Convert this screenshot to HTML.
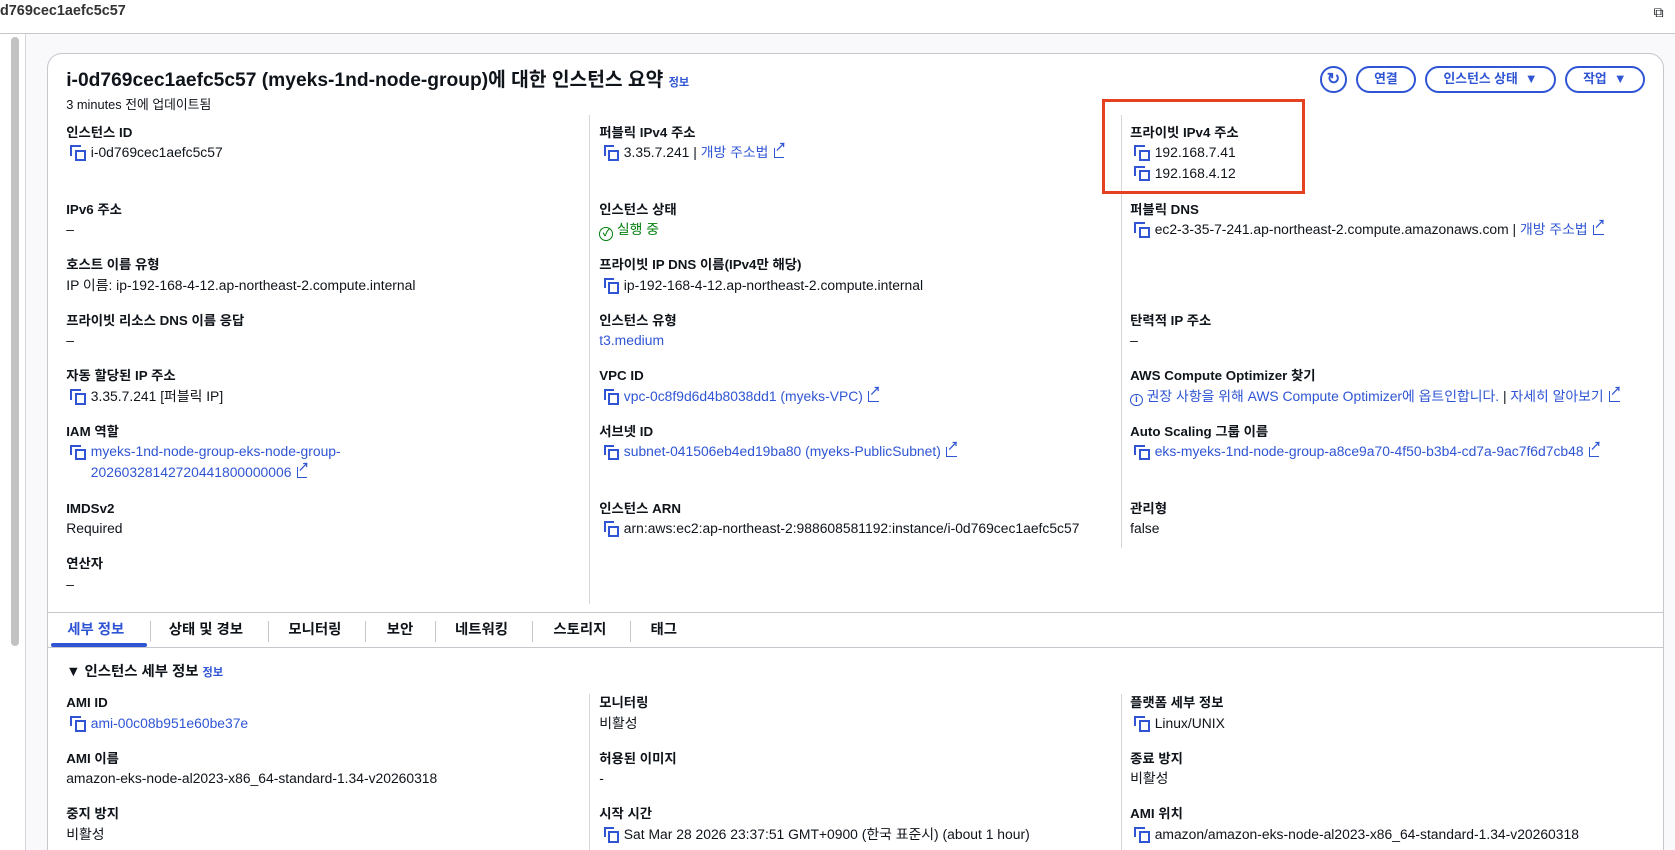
<!DOCTYPE html>
<html><head><meta charset="utf-8"><style>
html,body{margin:0;padding:0;overflow:hidden;background:#fff}
body{width:1568px;height:796px;zoom:1.0682;position:relative;font-family:"Liberation Sans","Noto Sans CJK KR",sans-serif;color:#0f141a;font-size:13px;line-height:16px}
.a{position:absolute;white-space:nowrap;line-height:16px}
.top{position:absolute;left:0;top:0;width:1568px;height:31px;border-bottom:1px solid #c6c6cd;background:#fff}
.bg{position:absolute;left:23px;top:32px;width:1545px;height:764px;background:#f9f9fb;border-left:1px solid #d5d5dc}
.scroll{position:absolute;left:10px;top:35px;width:8px;height:570px;background:#c2c2c2;border-radius:4px}
.card{position:absolute;left:44px;top:50px;width:1512px;height:760px;background:#fff;border:1px solid #c6c6cd;border-radius:14px}
.t{font-size:18px;font-weight:bold;line-height:22px}
.l{font-weight:bold;font-size:12.5px}
.b{color:#2f55d4}
.info{color:#2f55d4;font-size:10.5px;font-weight:bold}
.ic{display:inline-block;width:13px;height:13px;position:relative;vertical-align:-2px;margin-right:6px;margin-left:4px}
.ic:before{content:"";position:absolute;left:0;top:0;width:8px;height:8px;border-left:2px solid #2f55d4;border-top:2px solid #2f55d4}
.ic:after{content:"";position:absolute;left:4px;top:4px;width:7px;height:7px;border:2px solid #2f55d4}
.ext{display:inline-block;width:9px;height:9px;border:1.8px solid #2f55d4;border-top:none;border-right:none;margin-left:5px;position:relative;vertical-align:-1px}
.ext:after{content:"↗";position:absolute;left:0px;top:-6px;color:#2f55d4;font-size:11px;font-weight:bold;line-height:14px}
.div{position:absolute;width:1px;background:#d5d5dc}
.btn{position:absolute;top:62px;height:21px;border:2px solid #2f55d4;border-radius:13px;color:#2f55d4;font-weight:bold;font-size:12px;text-align:center;line-height:21px}
.tab{position:absolute;top:582px;font-size:13.5px;font-weight:bold;color:#0f141a}
.sep{position:absolute;top:581px;width:1px;height:20px;background:#c6c6cd}
</style></head><body>
<div class="top"></div>
<div class="a" style="left:0;top:3px;font-size:13.5px;font-weight:bold;color:#333">d769cec1aefc5c57</div>
<div class="a" style="left:1548px;top:4px;font-size:13px">⧉</div>
<div class="bg"></div>
<div class="scroll"></div>
<div class="card"></div>

<div class="a t" style="left:62px;top:65px">i-0d769cec1aefc5c57 (myeks-1nd-node-group)에 대한 인스턴스 요약 <span class="info">정보</span></div>
<div class="a" style="left:62px;top:90px;font-size:12px">3 minutes 전에 업데이트됨</div>

<div class="a" style="left:1236px;top:62px;width:21px;height:21px;border:2px solid #2f55d4;border-radius:50%;color:#2f55d4;text-align:center;font-weight:bold;line-height:21px;font-size:15px">↻</div>
<div class="btn" style="left:1269px;width:53px">연결</div>
<div class="btn" style="left:1334px;width:119px">인스턴스 상태 &nbsp;▼</div>
<div class="btn" style="left:1465px;width:71px">작업 &nbsp;▼</div>

<div class="div" style="left:551px;top:108px;height:457px"></div>
<div class="div" style="left:1049px;top:108px;height:405px"></div>

<!-- col1 -->
<div class="a l" style="left:62px;top:116px">인스턴스 ID</div>
<div class="a" style="left:62px;top:135px"><span class="ic"></span>i-0d769cec1aefc5c57</div>
<div class="a l" style="left:62px;top:188px">IPv6 주소</div>
<div class="a" style="left:62px;top:207px">–</div>
<div class="a l" style="left:62px;top:240px">호스트 이름 유형</div>
<div class="a" style="left:62px;top:259px">IP 이름: ip-192-168-4-12.ap-northeast-2.compute.internal</div>
<div class="a l" style="left:62px;top:292px">프라이빗 리소스 DNS 이름 응답</div>
<div class="a" style="left:62px;top:311px">–</div>
<div class="a l" style="left:62px;top:344px">자동 할당된 IP 주소</div>
<div class="a" style="left:62px;top:363px"><span class="ic"></span>3.35.7.241 [퍼블릭 IP]</div>
<div class="a l" style="left:62px;top:396px">IAM 역할</div>
<div class="a b" style="left:62px;top:415px"><span class="ic"></span>myeks-1nd-node-group-eks-node-group-</div>
<div class="a b" style="left:85px;top:434px">20260328142720441800000006<span class="ext"></span></div>
<div class="a l" style="left:62px;top:468px">IMDSv2</div>
<div class="a" style="left:62px;top:487px">Required</div>
<div class="a l" style="left:62px;top:520px">연산자</div>
<div class="a" style="left:62px;top:539px">–</div>

<!-- col2 -->
<div class="a l" style="left:561px;top:116px">퍼블릭 IPv4 주소</div>
<div class="a" style="left:561px;top:135px"><span class="ic"></span>3.35.7.241 | <span class="b">개방 주소법</span><span class="ext"></span></div>
<div class="a l" style="left:561px;top:188px">인스턴스 상태</div>
<div class="a" style="left:561px;top:207px;color:#037f0c"><span style="display:inline-block;width:11px;height:11px;border:1.5px solid #037f0c;border-radius:50%;font-size:9px;line-height:11px;text-align:center;vertical-align:-2px;font-weight:bold">✓</span> 실행 중</div>
<div class="a l" style="left:561px;top:240px">프라이빗 IP DNS 이름(IPv4만 해당)</div>
<div class="a" style="left:561px;top:259px"><span class="ic"></span>ip-192-168-4-12.ap-northeast-2.compute.internal</div>
<div class="a l" style="left:561px;top:292px">인스턴스 유형</div>
<div class="a b" style="left:561px;top:311px">t3.medium</div>
<div class="a l" style="left:561px;top:344px">VPC ID</div>
<div class="a b" style="left:561px;top:363px"><span class="ic"></span>vpc-0c8f9d6d4b8038dd1 (myeks-VPC)<span class="ext"></span></div>
<div class="a l" style="left:561px;top:396px">서브넷 ID</div>
<div class="a b" style="left:561px;top:415px"><span class="ic"></span>subnet-041506eb4ed19ba80 (myeks-PublicSubnet)<span class="ext"></span></div>
<div class="a l" style="left:561px;top:468px">인스턴스 ARN</div>
<div class="a" style="left:561px;top:487px"><span class="ic"></span>arn:aws:ec2:ap-northeast-2:988608581192:instance/i-0d769cec1aefc5c57</div>

<!-- col3 -->
<div class="a l" style="left:1058px;top:116px">프라이빗 IPv4 주소</div>
<div class="a" style="left:1058px;top:135px"><span class="ic"></span>192.168.7.41</div>
<div class="a" style="left:1058px;top:154px"><span class="ic"></span>192.168.4.12</div>
<div class="a l" style="left:1058px;top:188px">퍼블릭 DNS</div>
<div class="a" style="left:1058px;top:207px"><span class="ic"></span>ec2-3-35-7-241.ap-northeast-2.compute.amazonaws.com | <span class="b">개방 주소법</span><span class="ext"></span></div>
<div class="a l" style="left:1058px;top:292px">탄력적 IP 주소</div>
<div class="a" style="left:1058px;top:311px">–</div>
<div class="a l" style="left:1058px;top:344px">AWS Compute Optimizer 찾기</div>
<div class="a b" style="left:1058px;top:363px"><span style="display:inline-block;width:10px;height:10px;border:1.5px solid #2f55d4;border-radius:50%;font-size:9px;line-height:10px;text-align:center;font-weight:bold;vertical-align:-1px">i</span> 권장 사항을 위해 AWS Compute Optimizer에 옵트인합니다. <span style="color:#0f141a">|</span> 자세히 알아보기<span class="ext"></span></div>
<div class="a l" style="left:1058px;top:396px">Auto Scaling 그룹 이름</div>
<div class="a b" style="left:1058px;top:415px"><span class="ic"></span>eks-myeks-1nd-node-group-a8ce9a70-4f50-b3b4-cd7a-9ac7f6d7cb48<span class="ext"></span></div>
<div class="a l" style="left:1058px;top:468px">관리형</div>
<div class="a" style="left:1058px;top:487px">false</div>

<div class="a" style="left:1032px;top:93px;width:184px;height:83px;border:3px solid #e5401f"></div>

<!-- tabs -->
<div class="a" style="left:45px;top:573px;width:1512px;height:1px;background:#c6c6cd"></div>
<div class="a" style="left:45px;top:606px;width:1512px;height:1px;background:#c6c6cd"></div>
<div class="a" style="left:48px;top:602px;width:90px;height:4px;background:#2f55d4;border-radius:2px"></div>
<div class="tab" style="left:63px;color:#2f55d4">세부 정보</div>
<div class="sep" style="left:140px"></div>
<div class="tab" style="left:158px">상태 및 경보</div>
<div class="sep" style="left:251px"></div>
<div class="tab" style="left:270px">모니터링</div>
<div class="sep" style="left:342px"></div>
<div class="tab" style="left:362px">보안</div>
<div class="sep" style="left:407px"></div>
<div class="tab" style="left:426px">네트워킹</div>
<div class="sep" style="left:498px"></div>
<div class="tab" style="left:518px">스토리지</div>
<div class="sep" style="left:590px"></div>
<div class="tab" style="left:609px">태그</div>

<div class="a" style="left:62px;top:622px;font-size:13.5px;font-weight:bold">▼ 인스턴스 세부 정보 <span class="info">정보</span></div>

<div class="div" style="left:551px;top:650px;height:146px"></div>
<div class="div" style="left:1049px;top:650px;height:146px"></div>

<div class="a l" style="left:62px;top:650px">AMI ID</div>
<div class="a b" style="left:62px;top:669px"><span class="ic"></span>ami-00c08b951e60be37e</div>
<div class="a l" style="left:62px;top:702px">AMI 이름</div>
<div class="a" style="left:62px;top:721px">amazon-eks-node-al2023-x86_64-standard-1.34-v20260318</div>
<div class="a l" style="left:62px;top:754px">중지 방지</div>
<div class="a" style="left:62px;top:773px">비활성</div>

<div class="a l" style="left:561px;top:650px">모니터링</div>
<div class="a" style="left:561px;top:669px">비활성</div>
<div class="a l" style="left:561px;top:702px">허용된 이미지</div>
<div class="a" style="left:561px;top:721px">-</div>
<div class="a l" style="left:561px;top:754px">시작 시간</div>
<div class="a" style="left:561px;top:773px"><span class="ic"></span>Sat Mar 28 2026 23:37:51 GMT+0900 (한국 표준시) (about 1 hour)</div>

<div class="a l" style="left:1058px;top:650px">플랫폼 세부 정보</div>
<div class="a" style="left:1058px;top:669px"><span class="ic"></span>Linux/UNIX</div>
<div class="a l" style="left:1058px;top:702px">종료 방지</div>
<div class="a" style="left:1058px;top:721px">비활성</div>
<div class="a l" style="left:1058px;top:754px">AMI 위치</div>
<div class="a" style="left:1058px;top:773px"><span class="ic"></span>amazon/amazon-eks-node-al2023-x86_64-standard-1.34-v20260318</div>
</body></html>
